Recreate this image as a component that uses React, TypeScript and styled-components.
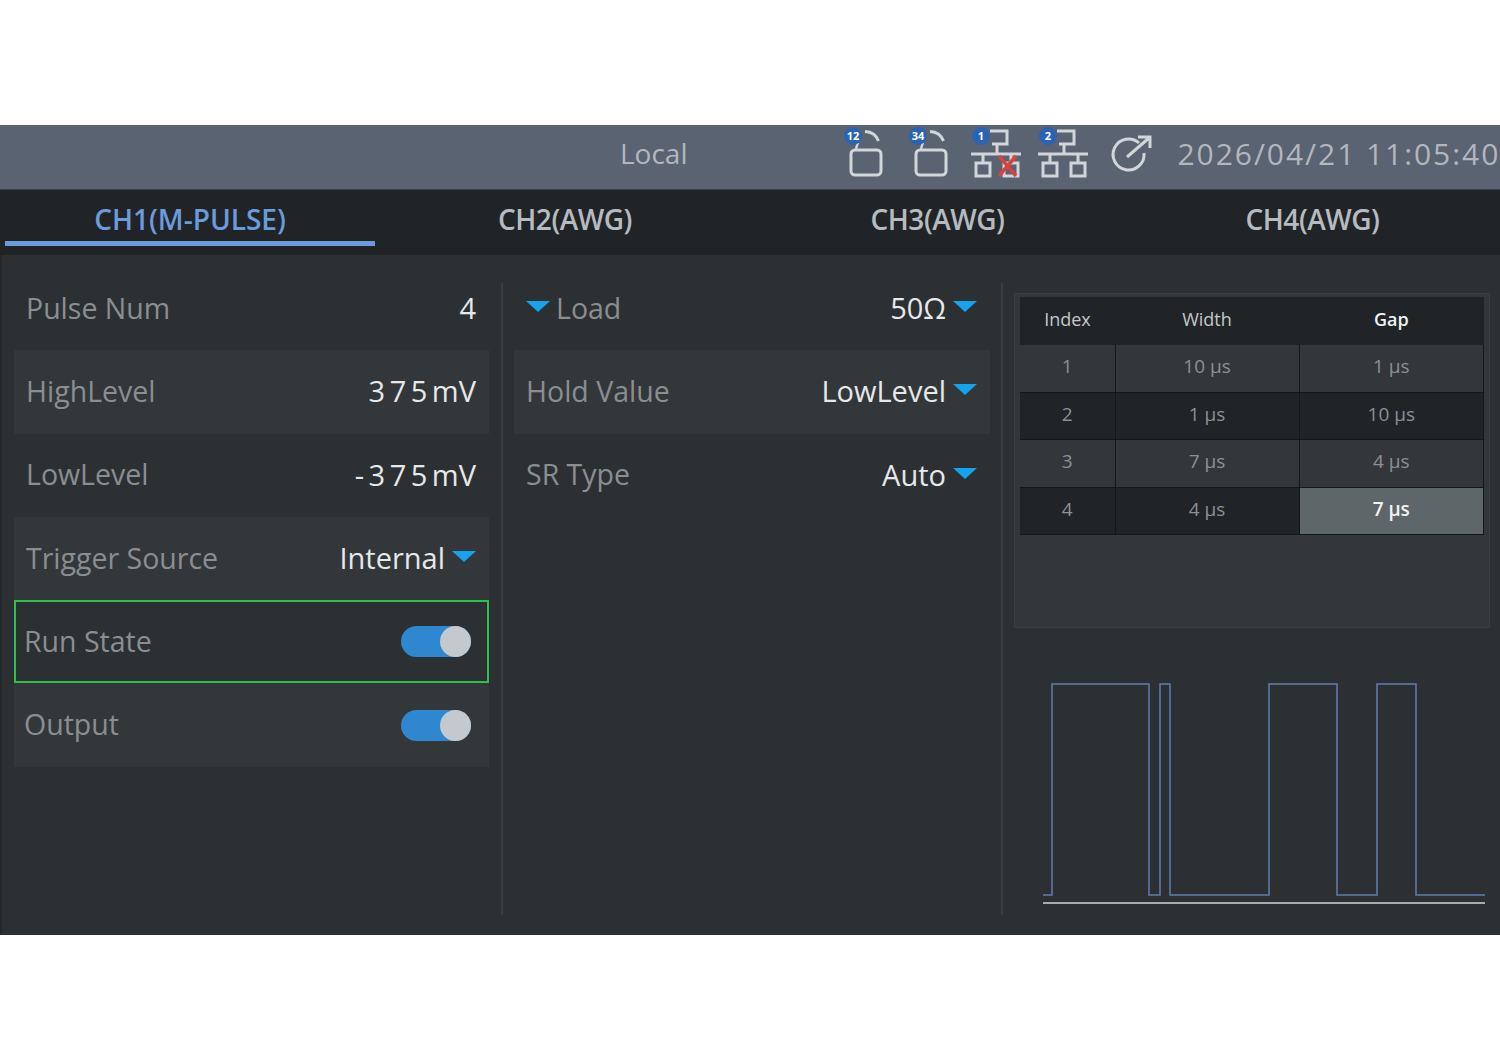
import * as React from "react";
import styled, { createGlobalStyle } from "styled-components";

const tableRows = [
  ["1", "10 µs", "1 µs"],
  ["2", "1 µs", "10 µs"],
  ["3", "7 µs", "4 µs"],
  ["4", "4 µs", "7 µs"],
];

const LockIcon = ({ badge }: { badge: string }) => (
  <svg width="50" height="60" viewBox="0 0 50 60">
    <rect x="7" y="23" width="30" height="25" rx="4" fill="none" stroke="#d3d6d9" strokeWidth="3" />
    <path d="M12 22L14 15" stroke="#d3d6d9" strokeWidth="2.5" />
    <path d="M21 4.5Q31 5 34.5 14" fill="none" stroke="#d3d6d9" strokeWidth="3" />
    <circle cx="9" cy="9" r="9" fill="#2a62b4" />
    <BadgeText x="9" y="13" textAnchor="middle">{badge}</BadgeText>
  </svg>
);

const NetIcon = ({ badge, broken }: { badge: string; broken?: boolean }) => (
  <svg width="52" height="60" viewBox="0 0 52 60">
    <path
      d="M20 4H37V17H22M27 17V27M1 27H51M13 27V36M41 27V36"
      fill="none"
      stroke="#d3d6d9"
      strokeWidth="3"
    />
    <rect x="6" y="36" width="14" height="13" fill="none" stroke="#d3d6d9" strokeWidth="3" />
    <rect x="34" y="36" width="14" height="13" fill="none" stroke="#d3d6d9" strokeWidth="3" />
    <circle cx="11" cy="9" r="9" fill="#2a62b4" />
    <BadgeText x="11" y="13" textAnchor="middle">{badge}</BadgeText>
    {broken && <path d="M29 29L46 49M46 29L29 49" stroke="#d8433f" strokeWidth="3.5" />}
  </svg>
);

const Switch = () => (
  <SwitchTrack>
    <SwitchKnob />
  </SwitchTrack>
);

export default function App() {
  return (
    <Page>
      <GlobalStyle />
      <Screen>
        <StatusBar>
          <LocalText>Local</LocalText>
          <IconStrip>
            <LockIcon badge="12" />
            <LockIcon badge="34" />
            <NetSlot>
              <NetIcon badge="1" broken />
            </NetSlot>
            <NetIcon badge="2" />
            <ArrowIcon width="46" height="44" viewBox="0 0 46 44">
              <path
                d="M31 10A15.5 15.5 0 1 0 36 20"
                fill="none"
                stroke="#d3d6d9"
                strokeWidth="3"
              />
              <path d="M19 24L41 5M30 4H42V15" fill="none" stroke="#d3d6d9" strokeWidth="3" />
            </ArrowIcon>
          </IconStrip>
          <Clock>2026/04/21 11:05:40</Clock>
        </StatusBar>
        <TabBar>
          <Tab $active>CH1(M-PULSE)</Tab>
          <Tab>CH2(AWG)</Tab>
          <Tab>CH3(AWG)</Tab>
          <Tab>CH4(AWG)</Tab>
        </TabBar>
        <Body>
          <Column>
            <Row>
              <Label>Pulse Num</Label>
              <Value>4</Value>
            </Row>
            <Row $shade>
              <Label>HighLevel</Label>
              <Value>
                <Digits>375</Digits>mV
              </Value>
            </Row>
            <Row>
              <Label>LowLevel</Label>
              <Value>
                <Digits>-375</Digits>mV
              </Value>
            </Row>
            <Row $shade>
              <Label>Trigger Source</Label>
              <Value>
                Internal
                <Caret />
              </Value>
            </Row>
            <Row $focused>
              <Label $tight>Run State</Label>
              <Switch />
            </Row>
            <Row $shade>
              <Label $tight>Output</Label>
              <Switch />
            </Row>
          </Column>
          <Divider />
          <Column>
            <Row>
              <Label>
                <LeadCaret />
                Load
              </Label>
              <Value>
                50Ω
                <Caret />
              </Value>
            </Row>
            <Row $shade>
              <Label>Hold Value</Label>
              <Value>
                LowLevel
                <Caret />
              </Value>
            </Row>
            <Row>
              <Label>SR Type</Label>
              <Value>
                Auto
                <Caret />
              </Value>
            </Row>
          </Column>
          <Divider />
          <RightColumn>
            <TablePanel>
              <PulseTable>
                <thead>
                  <tr>
                    <HeadCell>Index</HeadCell>
                    <HeadCell>Width</HeadCell>
                    <HeadCell $active>Gap</HeadCell>
                  </tr>
                </thead>
                <tbody>
                  {tableRows.map((row, i) => (
                    <tr key={row[0]}>
                      {row.map((c, j) => (
                        <Cell key={j} $odd={i % 2 === 0} $selected={i === 3 && j === 2}>
                          {c}
                        </Cell>
                      ))}
                    </tr>
                  ))}
                </tbody>
              </PulseTable>
            </TablePanel>
            <Chart width="476" height="280" viewBox="0 0 476 280">
              <path
                d="M29 268H38V57H135V268H146V57H156V268H255V57H323V268H363V57H402V268H471"
                fill="none"
                stroke="#5f7eae"
                strokeWidth="1.5"
              />
              <path d="M29 276H471" stroke="#a9abac" strokeWidth="2" />
            </Chart>
          </RightColumn>
        </Body>
      </Screen>
    </Page>
  );
}

const GlobalStyle = createGlobalStyle`
  html, body {
    margin: 0;
    padding: 0;
    background: #fff;
  }
`;

const Page = styled.div`
  width: 1500px;
  height: 1060px;
  padding-top: 125px;
  box-sizing: border-box;
  font-family: "Open Sans", "Liberation Sans", sans-serif;
  overflow: hidden;
`;

const Screen = styled.div`
  width: 1500px;
  height: 810px;
  display: flex;
  flex-direction: column;
  background: #2d3033;
`;

const StatusBar = styled.div`
  height: 64px;
  display: flex;
  align-items: center;
  background: #596372;
  border-bottom: 1px solid #3a4049;
  overflow: hidden;
`;

const LocalText = styled.div`
  width: 70px;
  margin-left: 620px;
  margin-bottom: 8px;
  font-size: 28px;
  color: #b3b7bd;
  white-space: nowrap;
`;

const IconStrip = styled.div`
  display: flex;
  align-items: center;
  gap: 15px;
  margin-left: 156px;
  height: 64px;
`;

const NetSlot = styled.div`
  margin-left: -4px;
  display: flex;
`;

const ArrowIcon = styled.svg`
  margin-left: 4px;
  margin-bottom: 5px;
`;

const BadgeText = styled.text`
  font-family: "Open Sans", sans-serif;
  font-size: 11px;
  font-weight: 700;
  fill: #fff;
`;

const Clock = styled.div`
  margin-left: 24px;
  margin-bottom: 8px;
  font-size: 30px;
  letter-spacing: 1.95px;
  color: #b3b7bd;
  white-space: nowrap;
`;

const TabBar = styled.div`
  height: 65px;
  display: grid;
  grid-template-columns: 380px 370px 375px 375px;
  background: #202427;
`;

const Tab = styled.div<{ $active?: boolean }>`
  position: relative;
  display: flex;
  align-items: center;
  justify-content: center;
  font-size: 28px;
  font-weight: 600;
  letter-spacing: ${(p) => (p.$active ? "0" : "-0.5px")};
  color: ${(p) => (p.$active ? "#6a9bdc" : "#b6bbbf")};
  padding-bottom: 8px;
  box-sizing: border-box;
  ${(p) =>
    p.$active &&
    `
    &::after {
      content: "";
      position: absolute;
      left: 5px;
      width: 370px;
      bottom: 9px;
      height: 5px;
      background: #6a9bdc;
    }
  `}
`;

const Body = styled.div`
  flex: 1;
  display: grid;
  grid-template-columns: 475px 25px 476px 24px 476px;
  padding: 12px 0 0 12px;
  box-sizing: border-box;
  border-left: 2px solid #25282a;
`;

const Column = styled.div`
  display: flex;
  flex-direction: column;
`;

const RightColumn = styled.div`
  display: flex;
  flex-direction: column;
  padding-top: 26px;
`;

const Divider = styled.div`
  width: 2px;
  height: 632px;
  margin-top: 16px;
  justify-self: center;
  background: #3a3e41;
`;

const Row = styled.div<{ $shade?: boolean; $focused?: boolean }>`
  height: 83.3px;
  box-sizing: border-box;
  display: flex;
  align-items: center;
  justify-content: space-between;
  padding: 0 13px 0 12px;
  background: ${(p) => (p.$shade ? "#33373a" : "transparent")};
  ${(p) => p.$focused && "border: 2px solid #2ac24f; padding: 0 11px 0 10px;"}
`;

const Label = styled.span<{ $tight?: boolean }>`
  display: flex;
  align-items: center;
  padding-bottom: 2px;
  font-size: 28.5px;
  color: #8a8e91;
  margin-left: ${(p) => (p.$tight ? "-2px" : "0")};
`;

const Value = styled.span`
  display: flex;
  align-items: center;
  padding-bottom: 2px;
  font-size: 29px;
  color: #e6e8e9;
`;

const Digits = styled.span`
  letter-spacing: 4.5px;
`;

const Caret = styled.span`
  display: inline-block;
  width: 0;
  height: 0;
  margin-left: 7px;
  border-left: 12px solid transparent;
  border-right: 12px solid transparent;
  border-top: 11px solid #16a2ec;
  position: relative;
  top: -1px;
`;

const LeadCaret = styled(Caret)`
  margin-left: 0;
  margin-right: 6px;
`;

const SwitchTrack = styled.div`
  position: relative;
  width: 70px;
  height: 31px;
  margin-right: 5px;
  border-radius: 16px;
  background: #2f87cf;
`;

const SwitchKnob = styled.div`
  position: absolute;
  right: 0;
  top: 0;
  width: 31px;
  height: 31px;
  border-radius: 50%;
  background: #c3c9cd;
`;

const TablePanel = styled.div`
  height: 335px;
  box-sizing: border-box;
  padding: 3px 5px;
  background: #33373a;
  border: 1px solid #3b3f42;
`;

const PulseTable = styled.table`
  width: 464px;
  border-collapse: collapse;
  table-layout: fixed;
  font-size: 19px;
`;

const HeadCell = styled.th<{ $active?: boolean }>`
  height: 48px;
  padding: 0 0 4px;
  box-sizing: border-box;
  background: #202427;
  font-size: 18px;
  font-weight: ${(p) => (p.$active ? 600 : 400)};
  color: ${(p) => (p.$active ? "#f0f1f2" : "#c5c8ca")};
  &:first-child {
    width: 95px;
  }
  &:nth-child(2) {
    width: 184px;
  }
`;

const Cell = styled.td<{ $odd: boolean; $selected: boolean }>`
  height: 47.4px;
  padding: 0 0 4px;
  text-align: center;
  border: 1px solid #141618;
  border-top: none;
  border-left-color: transparent;
  background: ${(p) => (p.$selected ? "#5f666a" : p.$odd ? "#33373a" : "#202427")};
  color: ${(p) => (p.$selected ? "#f2f3f4" : "#8c9093")};
  font-weight: ${(p) => (p.$selected ? 600 : 500)};
  box-sizing: border-box;
  &:first-child {
    border-left: none;
  }
`;

const Chart = styled.svg`
  display: block;
  margin-top: -1px;
`;
